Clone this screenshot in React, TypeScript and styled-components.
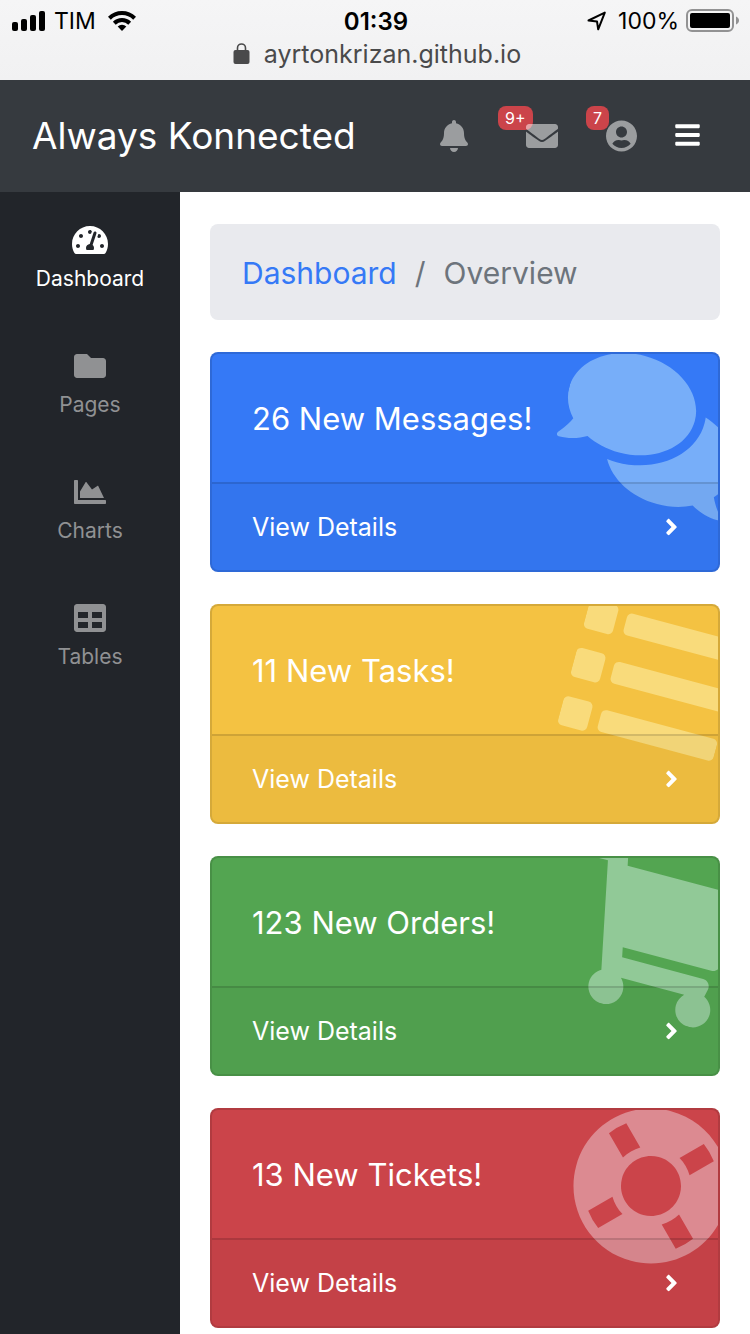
import React from "react";
import styled, { createGlobalStyle } from "styled-components";
import {
  FaAngleRight,
  FaBars,
  FaBell,
  FaChartArea,
  FaComments,
  FaEnvelope,
  FaFolder,
  FaShoppingCart,
  FaTable,
  FaTachometerAlt,
  FaUserCircle,
} from "react-icons/fa";

const GlobalStyle = createGlobalStyle`
  *, *::before, *::after { box-sizing: border-box; }
  body {
    margin: 0;
    background: #fff;
    font-family: Inter, "Liberation Sans", sans-serif;
    font-size: 32px;
    line-height: 48px;
  }
  a { text-decoration: none; }
  svg { display: block; flex: none; }
`;

const Page = styled.div`
  display: flex;
  flex-direction: column;
  min-height: 100vh;
`;

/* Icon box: the glyphs differ in width at the same height */
const Glyph = styled.span<{ $width: number; $height?: number }>`
  position: relative;
  display: block;
  flex: none;

  svg {
    width: ${(p) => p.$width}px;
    height: ${(p) => p.$height ?? 32}px;
  }
`;

/* Phone chrome */

const BrowserBar = styled.div`
  height: 80px;
  background: linear-gradient(#f5f5f6, #f1f1f2);
  color: #000;
`;

const StatusRow = styled.div`
  display: grid;
  grid-template-columns: 1fr auto 1fr;
  align-items: center;
  height: 40px;
  padding: 0 10px 0 12px;
  font-size: 23px;
  line-height: 40px;
`;

const StatusGroup = styled.div<{ $end?: boolean }>`
  display: flex;
  align-items: center;
  justify-content: ${(p) => (p.$end ? "flex-end" : "flex-start")};
  gap: ${(p) => (p.$end ? "7px" : "8px")};
`;

const Carrier = styled.span`
  margin-right: 4px;
`;

const Percent = styled.span`
  margin-left: 4px;
`;

const Clock = styled.time`
  padding-top: 2px;
  font-size: 24px;
  font-weight: 600;
`;

const AddressRow = styled.div`
  display: flex;
  align-items: center;
  justify-content: center;
  gap: 14px;
  height: 28px;
  padding-left: 4px;
  color: #4a4a4b;
  font-size: 25px;
  line-height: 28px;
`;

/* Top navigation */

const Navbar = styled.header`
  display: flex;
  align-items: center;
  justify-content: space-between;
  height: 112px;
  padding: 0 50px 0 32px;
  background: #363a3f;
`;

const Brand = styled.a`
  color: #fff;
  font-size: 37px;
  line-height: 60px;
`;

const NavActions = styled.nav`
  display: flex;
  align-items: center;
`;

const NavLink = styled.a<{ $gap: number }>`
  position: relative;
  margin-right: ${(p) => p.$gap}px;
  color: rgba(255, 255, 255, 0.5);
`;

const Badge = styled.span<{ $left: number }>`
  position: absolute;
  top: -14px;
  left: ${(p) => p.$left}px;
  padding: 0 7px;
  border-radius: 8px;
  background: #cb444a;
  color: #fff;
  font-size: 16px;
  line-height: 24px;
`;

const MenuButton = styled.button`
  padding: 0 0 2px;
  border: 0;
  background: none;
  color: #fff;
`;

/* Sidebar */

const Body = styled.div`
  display: flex;
  flex: 1;
`;

const Sidebar = styled.nav`
  flex: none;
  width: 180px;
  background: #22252a;
`;

const SideLink = styled.a<{ $active?: boolean }>`
  display: flex;
  flex-direction: column;
  align-items: center;
  gap: 6px;
  height: 126px;
  padding-top: 32px;
  color: ${(p) => (p.$active ? "#fff" : "#909193")};
  font-size: 21px;
  line-height: 34px;
`;

/* Content */

const Content = styled.main`
  display: flex;
  flex: 1;
  flex-direction: column;
  gap: 32px;
  min-width: 0;
  padding: 32px 30px 0;
`;

const Breadcrumb = styled.nav`
  display: flex;
  gap: 18px;
  padding: 25px 32px 23px;
  border-radius: 8px;
  background: #e9eaee;
  color: #6d747c;
  font-size: 30px;
`;

const Crumb = styled.a`
  color: #3579f6;
`;

const Card = styled.article<{ $color: string }>`
  position: relative;
  overflow: hidden;
  border: 2px solid rgba(0, 0, 0, 0.125);
  border-radius: 8px;
  background: ${(p) => p.$color};
  color: #fff;
`;

const CardArt = styled.div<{ $tint: string }>`
  position: absolute;
  top: -4px;
  right: -33px;
  display: flex;
  justify-content: center;
  width: 200px;
  color: ${(p) => p.$tint};
  transform: rotate(15deg);
`;

const CardTitle = styled.h2`
  position: relative;
  margin: 0;
  padding: 41px 40px 39px;
  font-size: 31px;
  font-weight: 400;
  line-height: 48px;
`;

const CardFooter = styled.a`
  position: relative;
  display: flex;
  align-items: center;
  justify-content: space-between;
  padding: 24px 40px;
  border-top: 2px solid rgba(0, 0, 0, 0.125);
  background: rgba(0, 0, 0, 0.03);
  color: #fff;
  font-size: 25px;
  line-height: 38px;
`;

const SignalIcon = () => (
  <svg width="34" height="20" viewBox="0 0 34 20" aria-label="Signal">
    <rect x="0" y="11" width="6" height="9" rx="2" />
    <rect x="9" y="8" width="6" height="12" rx="2" />
    <rect x="18" y="4" width="6" height="16" rx="2" />
    <rect x="27" y="0" width="6" height="20" rx="2" />
  </svg>
);

const WifiIcon = () => (
  <svg width="28" height="20" viewBox="0 0 28 20" aria-label="Wi-Fi">
    <g fill="none" stroke="#000" strokeWidth="4">
      <path d="M1.4 7.2a18 18 0 0 1 25.2 0" />
      <path d="M6.3 12.2a11 11 0 0 1 15.4 0" />
    </g>
    <path d="M14 20l-4.300-4.600a6.200 6.200 0 0 1 8.600 0z" />
  </svg>
);

const LocationIcon = () => (
  <svg width="20" height="20" viewBox="0 0 20 20" aria-label="Location">
    <path
      d="M1.500 9.500L17.800 1.600 11.200 18.300 10 10.500z"
      fill="none"
      stroke="#000"
      strokeWidth="2"
      strokeLinejoin="round"
    />
  </svg>
);

const BatteryIcon = () => (
  <svg width="54" height="24" viewBox="0 0 54 24" aria-label="Battery">
    <rect x="1" y="1" width="46" height="21" rx="5" fill="none" stroke="#929293" strokeWidth="2" />
    <rect x="4" y="4" width="40" height="15" rx="2" />
    <path d="M50 7.500c4 1.500 4 6.500 0 8z" fill="#929293" />
  </svg>
);

const LockIcon = () => (
  <svg width="17" height="22" viewBox="0 0 17 22" aria-label="Secure">
    <path d="M4.500 8V5a4 4 0 0 1 8 0v3" fill="none" stroke="currentColor" strokeWidth="1.600" />
    <rect x="0.500" y="7" width="16" height="14" rx="2" fill="currentColor" />
  </svg>
);

const LifeRingIcon = () => (
  <svg viewBox="0 0 512 512" fill="currentColor" aria-hidden="true">
    <path d="M256 8C119.033 8 8 119.033 8 256s111.033 248 248 248 248-111.033 248-248S392.967 8 256 8zm173.696 119.559l-63.399 63.399c-10.987-18.559-26.67-34.252-45.255-45.255l63.399-63.399a218.396 218.396 0 0 1 45.255 45.255zM256 352c-53.019 0-96-42.981-96-96s42.981-96 96-96 96 42.981 96 96-42.981 96-96 96zM127.559 82.304l63.399 63.399c-18.559 10.987-34.252 26.67-45.255 45.255l-63.399-63.399a218.372 218.372 0 0 1 45.255-45.255zM82.304 384.441l63.399-63.399c10.987 18.559 26.67 34.252 45.255 45.255l-63.399 63.399a218.396 218.396 0 0 1-45.255-45.255zm302.137 45.255l-63.399-63.399c18.559-10.987 34.252-26.67 45.255-45.255l63.399 63.399a218.403 218.403 0 0 1-45.255 45.255z" />
  </svg>
);

const ListIcon = () => (
  <svg viewBox="0 0 512 512" fill="currentColor" aria-hidden="true">
    {[96, 256, 416].map((y) => (
      <React.Fragment key={y}>
        <rect x="0" y={y - 48} width="96" height="96" rx="16" />
        <rect x="128" y={y - 36} width="384" height="72" rx="16" />
      </React.Fragment>
    ))}
  </svg>
);

const sections = [
  { label: "Dashboard", Icon: FaTachometerAlt, width: 36 },
  { label: "Pages", Icon: FaFolder, width: 32 },
  { label: "Charts", Icon: FaChartArea, width: 32 },
  { label: "Tables", Icon: FaTable, width: 32 },
];

const cards = [
  { title: "26 New Messages!", color: "#3579f6", tint: "#77aef9", Icon: FaComments, width: 180 },
  { title: "11 New Tasks!", color: "#f4c242", tint: "#f9db7b", Icon: ListIcon, width: 160 },
  { title: "123 New Orders!", color: "#53a551", tint: "#91c997", Icon: FaShoppingCart, width: 180 },
  { title: "13 New Tickets!", color: "#cb444a", tint: "#dc8a91", Icon: LifeRingIcon, width: 160 },
];

export default function App() {
  return (
    <Page>
      <GlobalStyle />
      <BrowserBar>
        <StatusRow>
          <StatusGroup>
            <SignalIcon />
            <Carrier>TIM</Carrier>
            <WifiIcon />
          </StatusGroup>
          <Clock>01:39</Clock>
          <StatusGroup $end>
            <LocationIcon />
            <Percent>100%</Percent>
            <BatteryIcon />
          </StatusGroup>
        </StatusRow>
        <AddressRow>
          <LockIcon />
          <span>ayrtonkrizan.github.io</span>
        </AddressRow>
      </BrowserBar>

      <Navbar>
        <Brand href="#">Always Konnected</Brand>
        <NavActions>
          <NavLink href="#" $gap={58} aria-label="Alerts">
            <Glyph $width={28}>
              <FaBell />
            </Glyph>
          </NavLink>
          <NavLink href="#" $gap={48} aria-label="Messages">
            <Badge $left={-28}>9+</Badge>
            <Glyph $width={32}>
              <FaEnvelope />
            </Glyph>
          </NavLink>
          <NavLink href="#" $gap={38} aria-label="Account">
            <Badge $left={-20}>7</Badge>
            <Glyph $width={31}>
              <FaUserCircle />
            </Glyph>
          </NavLink>
          <MenuButton type="button" aria-label="Toggle sidebar">
            <Glyph $width={25} $height={28}>
              <FaBars />
            </Glyph>
          </MenuButton>
        </NavActions>
      </Navbar>

      <Body>
        <Sidebar>
          {sections.map(({ label, Icon, width }, i) => (
            <SideLink key={label} href="#" $active={i === 0}>
              <Glyph $width={width}>
                <Icon />
              </Glyph>
              {label}
            </SideLink>
          ))}
        </Sidebar>
        <Content>
          <Breadcrumb aria-label="Breadcrumb">
            <Crumb href="#">Dashboard</Crumb>
            <span>/</span>
            <span>Overview</span>
          </Breadcrumb>
          {cards.map(({ title, color, tint, Icon, width }) => (
            <Card key={title} $color={color}>
              <CardArt $tint={tint}>
                <Glyph $width={width} $height={160}>
                  <Icon />
                </Glyph>
              </CardArt>
              <CardTitle>{title}</CardTitle>
              <CardFooter href="#">
                View Details
                <Glyph $width={13} $height={26}>
                  <FaAngleRight />
                </Glyph>
              </CardFooter>
            </Card>
          ))}
        </Content>
      </Body>
    </Page>
  );
}
